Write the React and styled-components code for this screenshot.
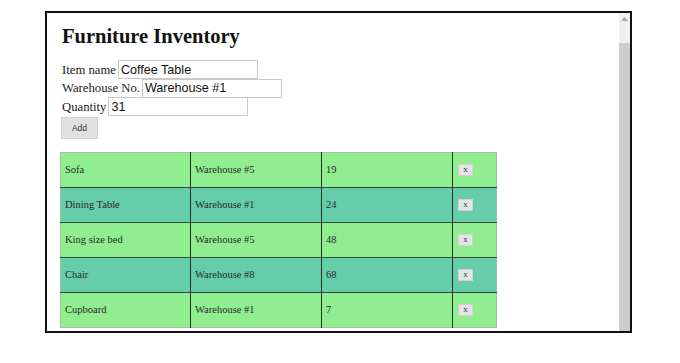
import React from "react";
import styled, { createGlobalStyle } from "styled-components";

const Global = createGlobalStyle`
  html, body { margin: 0; padding: 0; background: #fff; }
  body { font-family: "Liberation Serif", "Times New Roman", serif; }
`;

const Frame = styled.div`
  box-sizing: border-box;
  margin: 11px 0 0 45px;
  width: 587px;
  height: 322px;
  border: 2px solid #111;
  display: flex;
  overflow: hidden;
`;

const Content = styled.div`
  flex: 1;
  padding-left: 14px;
  overflow: hidden;
`;

const Title = styled.h1`
  margin: 11px 0 0 1px;
  font-family: "Liberation Serif", "Times New Roman", serif;
  font-weight: bold;
  font-size: 20.5px;
  line-height: 24px;
  color: #111;
`;

const Form = styled.div`
  margin-top: 12px;
  display: flex;
  flex-direction: column;
`;

const Row = styled.div`
  display: flex;
  align-items: baseline;
  gap: 2px;
  height: 18.6px;
  padding-left: 1px;
`;

const Label = styled.span`
  font-family: "Liberation Serif", "Times New Roman", serif;
  font-size: 12.7px;
  color: #222;
`;

const Input = styled.input`
  box-sizing: border-box;
  width: 140px;
  height: 19px;
  padding: 0 2px;
  border: 1px solid #c9c9c9;
  font-family: "Liberation Sans", Arial, sans-serif;
  font-size: 12.6px;
  color: #111;
  outline: none;
`;

const Button = styled.button`
  box-sizing: border-box;
  width: 37px;
  height: 22px;
  margin-top: 1px;
  background: #e1e1e1;
  border: 1px solid #cfcfcf;
  font-family: "Liberation Sans", Arial, sans-serif;
  font-size: 8.5px;
  color: #333;
  padding: 0;
  align-self: flex-start;
`;

const Table = styled.table`
  margin-top: 13px;
  margin-left: -1px;
  border-collapse: collapse;
  width: 436px;
  table-layout: fixed;
  border: 1px solid #9fbf9f;
`;

const Tr = styled.tr`
  height: 35px;
  background: ${(p) => (p.$alt ? "#66cdaa" : "#90ee90")};
`;

const Td = styled.td`
  padding: 0 4px;
  font-family: "Liberation Serif", "Times New Roman", serif;
  font-size: 10.5px;
  color: #2a2a2a;
  vertical-align: middle;
  border-top: ${(p) => (p.$first ? "none" : "1px solid #2c4a36")};
  & + & { border-left: 1px solid #1e321e; }
`;

const XButton = styled.button`
  box-sizing: border-box;
  width: 15px;
  height: 12px;
  padding: 0;
  background: #e4e4e4;
  border: 1px solid #d2d2d2;
  font-family: "Liberation Serif", "Times New Roman", serif;
  font-size: 9px;
  line-height: 9px;
  color: #333;
  display: block;
  margin-left: 1px;
`;

const Scrollbar = styled.div`
  width: 11px;
  display: flex;
  flex-direction: column;
  background: #f0f0f0;
`;

const Arrow = styled.div`
  height: 17px;
  display: flex;
  justify-content: center;
  padding-top: 4px;
  box-sizing: border-box;
`;

const Gap = styled.div`
  height: 13px;
`;

const Thumb = styled.div`
  flex: 1;
  background: #cdcdcd;
`;

const items = [
  ["Sofa", "Warehouse #5", "19"],
  ["Dining Table", "Warehouse #1", "24"],
  ["King size bed", "Warehouse #5", "48"],
  ["Chair", "Warehouse #8", "68"],
  ["Cupboard", "Warehouse #1", "7"],
];

export default function App() {
  return (
    <>
      <Global />
      <Frame>
        <Content>
          <Title>Furniture Inventory</Title>
          <Form>
            <Row>
              <Label>Item name</Label>
              <Input defaultValue="Coffee Table" />
            </Row>
            <Row>
              <Label>Warehouse No.</Label>
              <Input defaultValue="Warehouse #1" />
            </Row>
            <Row>
              <Label>Quantity</Label>
              <Input defaultValue="31" />
            </Row>
            <Button>Add</Button>
          </Form>
          <Table>
            <colgroup>
              <col style={{ width: 130 }} />
              <col style={{ width: 131 }} />
              <col style={{ width: 131 }} />
              <col style={{ width: 44 }} />
            </colgroup>
            <tbody>
              {items.map((it, i) => (
                <Tr key={i} $alt={i % 2 === 1}>
                  <Td $first={i === 0}>{it[0]}</Td>
                  <Td $first={i === 0}>{it[1]}</Td>
                  <Td $first={i === 0}>{it[2]}</Td>
                  <Td $first={i === 0}>
                    <XButton>x</XButton>
                  </Td>
                </Tr>
              ))}
            </tbody>
          </Table>
        </Content>
        <Scrollbar>
          <Arrow>
            <svg width="7" height="4" viewBox="0 0 7 4">
              <path d="M0 4 L3.5 0 L7 4 Z" fill="#a3a3a3" />
            </svg>
          </Arrow>
          <Gap />
          <Thumb />
        </Scrollbar>
      </Frame>
    </>
  );
}
